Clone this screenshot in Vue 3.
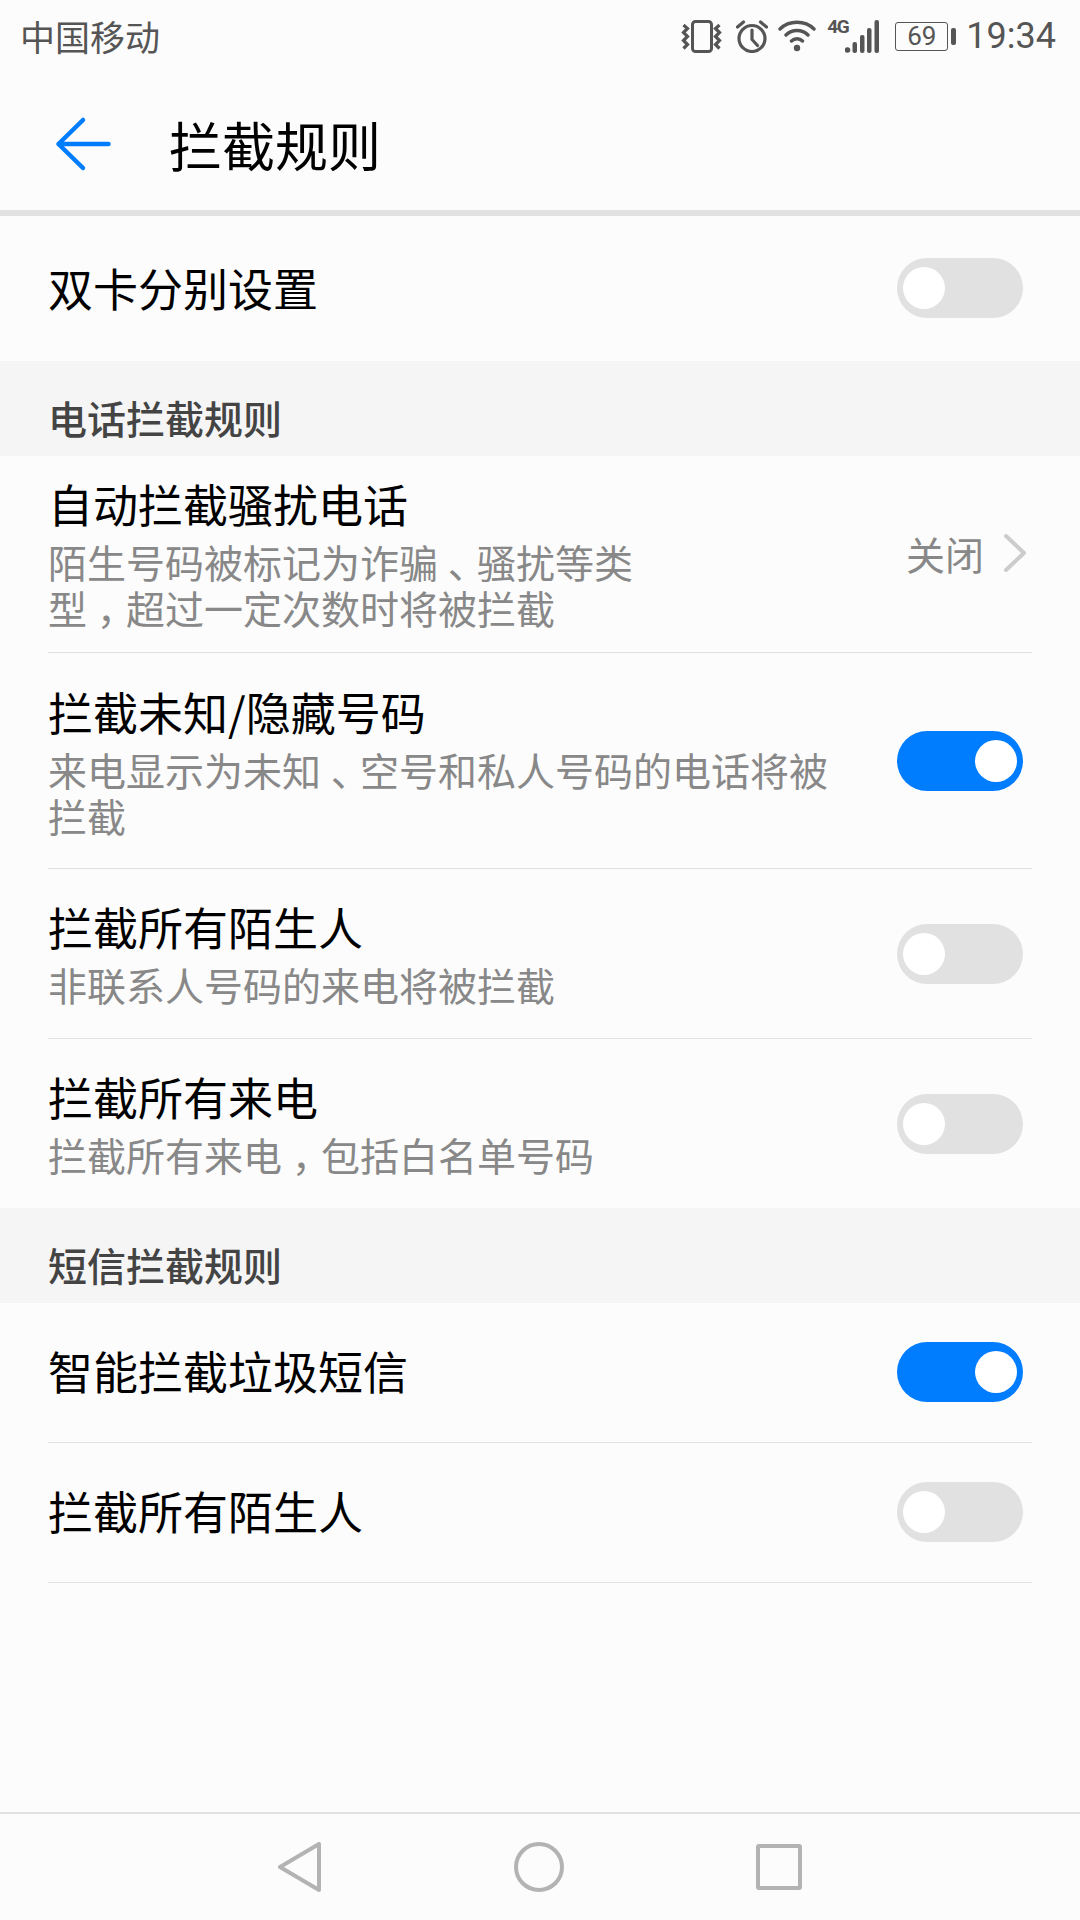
<template>
  <div class="screen">
    <div class="status-bar">
      <span class="carrier">中国移动</span>
      <div class="status-icons">
        <svg class="ic-vibrate" width="41" height="33" viewBox="0 0 41 33" fill="none" stroke="#555" stroke-width="3">
          <rect x="11.5" y="1.5" width="19" height="30" rx="3" />
          <path d="M2.500 5l4 3.500-4 4 4 4-4 4 4 4-4 4M38.500 5l-4 3.500 4 4-4 4 4 4-4 4 4 4" stroke-width="3.200" />
        </svg>
        <svg class="ic-alarm" width="32" height="33" viewBox="0 0 32 33" fill="none" stroke="#555" stroke-width="3.2">
          <circle cx="16" cy="18.5" r="13" />
          <path d="M16 10v9.500l5.500 6M1.500 7l6-5M30.500 7l-6-5" stroke-linecap="round" />
        </svg>
        <svg class="ic-wifi" width="38" height="32" viewBox="0 0 38 32" fill="none" stroke="#555" stroke-width="3.4" stroke-linecap="round">
          <path d="M2 9c9-9 25-9 34 0M8 15c6-6 16-6 22 0M13.500 21c3-3 8-3 11 0" />
          <circle cx="19" cy="28" r="3.200" fill="#555" stroke="none" />
        </svg>
        <div class="signal">
          <span class="net">4G</span>
          <svg width="34" height="33" viewBox="0 0 34 33" fill="#555">
            <circle cx="2.500" cy="30" r="2.800" />
            <rect x="7.500" y="22" width="4.500" height="11" rx="2" />
            <rect x="15" y="15" width="4.500" height="18" rx="2" />
            <rect x="22" y="8" width="4.500" height="25" rx="2" />
            <rect x="29.500" y="0" width="4.500" height="33" rx="2" />
          </svg>
        </div>
        <div class="battery">
          <span class="battery-body">69</span>
          <span class="battery-tip"></span>
        </div>
        <span class="time">19:34</span>
      </div>
    </div>

    <header class="toolbar">
      <svg class="back" width="58" height="56" viewBox="0 0 58 56" fill="none" stroke="#007dff" stroke-width="4.500" stroke-linecap="round" stroke-linejoin="round">
        <path d="M3.500 28h50M28 4L3.500 28 28 52" />
      </svg>
      <h1>拦截规则</h1>
    </header>

    <div class="row plain">
      <div class="row-text"><div class="title">双卡分别设置</div></div>
      <span class="switch"></span>
    </div>

    <div class="section">电话拦截规则</div>
    <div v-for="item in callRules" :key="item.title" class="row" :class="item.cls">
      <div class="row-text">
        <div class="title">{{ item.title }}</div>
        <div class="sub">
          <span v-for="(part, i) in splitPunct(item.sub)" :key="i" :class="{ punct: i % 2 === 1 }">{{ part }}</span>
        </div>
      </div>
      <div v-if="item.value" class="value">
        <span>{{ item.value }}</span>
        <svg width="22" height="38" viewBox="0 0 22 38" fill="none" stroke="#ccc" stroke-width="4" stroke-linecap="round" stroke-linejoin="round">
          <path d="M2 2l18 17L2 36" />
        </svg>
      </div>
      <span v-else class="switch" :class="{ on: item.on }"></span>
    </div>

    <div class="section">短信拦截规则</div>
    <div v-for="item in smsRules" :key="item.title" class="row sms">
      <div class="row-text"><div class="title">{{ item.title }}</div></div>
      <span class="switch" :class="{ on: item.on }"></span>
    </div>

    <div class="spacer"></div>

    <nav class="nav-bar">
      <svg width="44" height="50" viewBox="0 0 44 50" fill="none" stroke="#b3b3b3" stroke-width="4" stroke-linejoin="round">
        <path d="M41 2v46L2 25z" />
      </svg>
      <svg width="50" height="50" viewBox="0 0 50 50" fill="none" stroke="#b3b3b3" stroke-width="4">
        <circle cx="25" cy="25" r="23" />
      </svg>
      <svg width="46" height="46" viewBox="0 0 46 46" fill="none" stroke="#b3b3b3" stroke-width="4" stroke-linejoin="round">
        <rect x="2" y="2" width="42" height="42" rx="1" />
      </svg>
    </nav>
  </div>
</template>

<script setup>
const callRules = [
  { title: '自动拦截骚扰电话', sub: '陌生号码被标记为诈骗、骚扰等类型，超过一定次数时将被拦截', value: '关闭', cls: 'auto' },
  { title: '拦截未知/隐藏号码', sub: '来电显示为未知、空号和私人号码的电话将被拦截', on: true, cls: 'two-line' },
  { title: '拦截所有陌生人', sub: '非联系人号码的来电将被拦截', on: false, cls: 'one-line' },
  { title: '拦截所有来电', sub: '拦截所有来电，包括白名单号码', on: false, cls: 'one-line last' }
]

const smsRules = [
  { title: '智能拦截垃圾短信', on: true },
  { title: '拦截所有陌生人', on: false }
]

// the phone centres its punctuation in the cell, so it gets its own span
function splitPunct(text) {
  return text.split(/([，、])/)
}
</script>

<style>
html, body {
  margin: 0;
  background: #fcfcfc;
}
</style>

<style scoped>
.screen {
  width: 1080px;
  height: 1920px;
  display: flex;
  flex-direction: column;
  background: #fcfcfc;
  font-family: "Noto Sans CJK SC", "Noto Sans", sans-serif;
  overflow: hidden;
}

.status-bar {
  height: 72px;
  padding: 0 24px 0 20px;
  display: flex;
  align-items: center;
  justify-content: space-between;
  color: #555;
  box-sizing: border-box;
}

.carrier {
  font-size: 35px;
  margin-bottom: 2px;
}

.status-icons {
  display: flex;
  align-items: center;
}

.ic-vibrate { margin-right: 14px; }
.ic-alarm { margin-right: 10px; }
.ic-wifi { margin-right: 11px; }

.signal {
  position: relative;
  width: 52px;
  height: 33px;
  display: flex;
  justify-content: flex-end;
  margin-right: 16px;
}

.net {
  position: absolute;
  left: 0;
  top: -2px;
  font-family: "Roboto", sans-serif;
  font-size: 19px;
  font-weight: 700;
  letter-spacing: -1.5px;
  line-height: 18px;
}

.battery {
  display: flex;
  align-items: center;
  margin-right: 10px;
}

.battery-body {
  width: 53px;
  height: 29px;
  border: 1.5px solid #555;
  border-radius: 3px;
  box-sizing: border-box;
  font-family: "Roboto", sans-serif;
  font-size: 26px;
  line-height: 26px;
  text-align: center;
}

.battery-tip {
  width: 5px;
  height: 17px;
  margin-left: 3px;
  border-radius: 2px;
  background: #555;
}

.time {
  font-family: "Roboto", sans-serif;
  font-size: 36px;
}

.toolbar {
  height: 132px;
  padding: 6px 0 0 55px;
  display: flex;
  align-items: center;
  border-bottom: 6px solid #e1e1e1;
}

.back {
  margin-right: 56px;
}

.toolbar h1 {
  margin: 0;
  font-size: 53px;
  font-weight: 400;
  color: #000;
}

.row {
  margin: 0 48px;
  display: flex;
  align-items: center;
  justify-content: space-between;
  border-bottom: 1.5px solid #e1e1e1;
  box-sizing: border-box;
}

.row.plain {
  height: 145px;
  border-bottom: none;
}

.row.plain .switch {
  margin-bottom: 2px;
}

.row.auto { height: 197px; }
.row.two-line { height: 216px; }
.row.one-line { height: 170px; }
.row.last { height: 169px; border-bottom: none; }
.row.sms { height: 140px; }

.row-text {
  flex: 1;
  min-width: 0;
  margin-bottom: 2px;
}

.row.two-line .row-text {
  margin-bottom: 0;
}

.row.sms .row-text {
  margin-bottom: 3px;
}

.row.sms .switch {
  margin-bottom: 2px;
}

.title {
  font-size: 45px;
  line-height: 56px;
  color: #000;
}

.sub {
  margin-top: 6px;
  font-size: 39px;
  line-height: 46px;
  color: #888;
  max-width: 790px;
}

.punct {
  font-feature-settings: "halt";
  padding: 0 0.25em;
}

.auto .sub {
  max-width: 590px;
}

.section {
  height: 95px;
  padding: 0 0 11px 48px;
  display: flex;
  align-items: flex-end;
  background: #f5f5f5;
  box-sizing: border-box;
  font-size: 39px;
  font-weight: 500;
  line-height: 55px;
  color: #444;
}

.value {
  display: flex;
  align-items: center;
  gap: 20px;
  margin-right: 6px;
  margin-bottom: 2px;
  font-size: 39px;
  color: #888;
}

.switch {
  position: relative;
  flex: none;
  width: 126px;
  height: 60px;
  margin-right: 9px;
  border-radius: 30px;
  background: #e1e1e1;
}

.switch::after {
  content: "";
  position: absolute;
  left: 6px;
  top: 9px;
  width: 42px;
  height: 42px;
  border-radius: 50%;
  background: #fff;
}

.switch.on {
  background: #007dff;
}

.switch.on::after {
  left: 78px;
}

.spacer {
  flex: 1;
}

.nav-bar {
  height: 106px;
  display: flex;
  align-items: center;
  justify-content: center;
  gap: 192px;
  border-top: 2px solid #e1e1e1;
}
</style>
